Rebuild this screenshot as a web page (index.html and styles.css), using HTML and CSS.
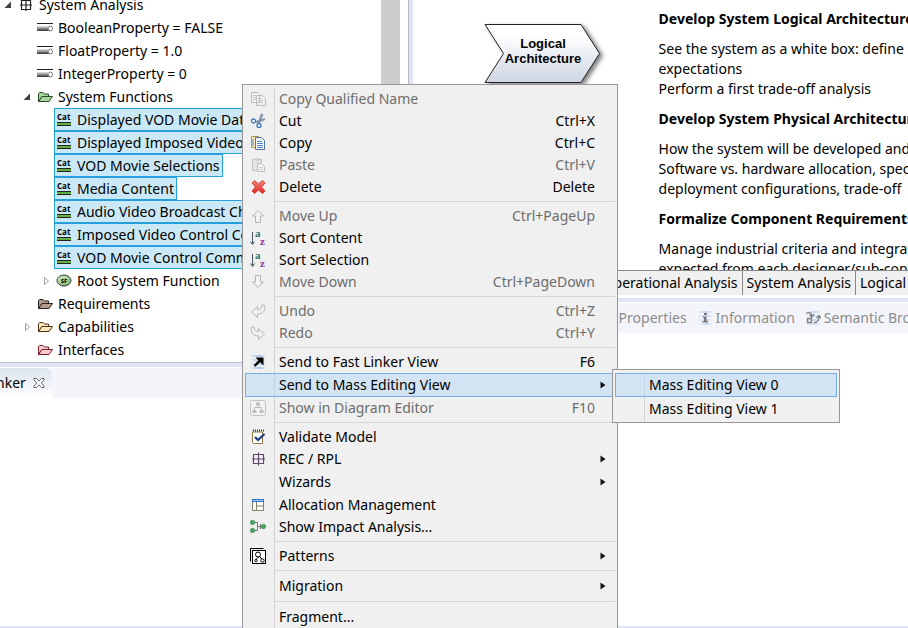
FILE: index.html
```html
<!DOCTYPE html>
<html lang="en">
<head>
<meta charset="utf-8">
<title>System Analysis</title>
<link rel="stylesheet" href="styles.css">
</head>
<body>
<svg class="defs" aria-hidden="true">
  <defs>
    <linearGradient id="steel" x1="0" y1="0" x2="0" y2="1"><stop offset="0" stop-color="#e8e8e8"/><stop offset="1" stop-color="#555"/></linearGradient>
    <linearGradient id="arrowFill" x1="0" y1="0" x2="0" y2="1"><stop offset="0.2" stop-color="#fff"/><stop offset="1" stop-color="#ccd5e1"/></linearGradient>
    <linearGradient id="redFill" x1="0" y1="0" x2="0" y2="1"><stop offset="0" stop-color="#f58a7c"/><stop offset="1" stop-color="#d9251d"/></linearGradient>
    <linearGradient id="leaf" x1="0" y1="0" x2="1" y2="1"><stop offset="0" stop-color="#d8f0d0"/><stop offset="1" stop-color="#6fae66"/></linearGradient>
    <linearGradient id="haze" gradientUnits="userSpaceOnUse" x1="0" y1="0" x2="16" y2="0"><stop offset="0" stop-color="#a9c8f0" stop-opacity="0.1"/><stop offset="0.6" stop-color="#a9c8f0"/><stop offset="1" stop-color="#a9c8f0" stop-opacity="0.2"/></linearGradient>
    <symbol id="i-open" viewBox="0 0 8 8"><path d="M7 0.5V7H0.5z" fill="#404040"/></symbol>
    <symbol id="i-closed" viewBox="0 0 8 8"><path d="M2.500 0.500L6.500 4 2.500 7.500z" fill="#fff" stroke="#a0a0a0"/></symbol>
    <symbol id="i-grid" viewBox="0 0 16 16"><path d="M3.500 3.500h9v9h-9zM8 2v12M2 8h12" fill="none" stroke="#222" stroke-width="1.200"/></symbol>
    <symbol id="i-prop" viewBox="0 0 16 16"><path d="M0 3.500h16" stroke="#222"/><path d="M0 6h11v4H0z" fill="url(#steel)"/><path d="M0 10.500h13" stroke="#444"/><ellipse cx="13.500" cy="8.500" rx="2" ry="2.500" fill="#fff" stroke="#777"/></symbol>
    <symbol id="i-folder" viewBox="0 0 16 16"><path d="M1.500 12.500V4.500L2.500 3.500H6L7.500 5H11.500V7.500H5Z" stroke="currentColor"/><path d="M1.500 12.500L5 7.500H15.500L12 12.500Z" stroke="currentColor" stroke-linejoin="round"/></symbol>
    <symbol id="i-cat" viewBox="0 0 16 16"><text x="1" y="8" class="cat-text">Cat</text><path d="M1 10h14v3H1z" fill="#62b044"/><path d="M1 10.500h14M1 13.500h14" stroke="#222"/></symbol>
    <symbol id="i-sf" viewBox="0 0 16 16"><ellipse cx="8" cy="7.500" rx="7" ry="5.500" fill="url(#leaf)" stroke="#333"/><text x="8" y="10" class="sf-text">SF</text></symbol>
    <symbol id="i-close" viewBox="0 0 12 12"><path d="M1 1.500H3.500L6 4.200 8.500 1.500H11V3L8.200 6 11 9V10.500H8.500L6 7.800 3.500 10.500H1V9L3.800 6 1 3Z" fill="#fff" stroke="#555" stroke-width="0.9"/></symbol>
    <symbol id="i-pages" viewBox="0 0 16 16"><path d="M1.500 1.500h6l2 2v8h-8zM6.500 4.500h6l3 3v7h-9z" fill="#f2f2f2" stroke="#bcbcbc"/><path d="M3 4.500h3M3 6.500h3M3 8.500h3M8 7.500h4M8 9.500h5M8 11.500h5" stroke="#c4c4c4"/></symbol>
    <symbol id="i-cut" viewBox="0 0 16 16"><path d="M8.500 10L11 1l2 .5L9.500 10zM5 8.500L14.500 5.500l.5 1.200L7 10z" fill="#8fa2b8" stroke="#6b829c" stroke-width=".6"/><circle cx="3.500" cy="8" r="2" fill="#fff" stroke="#3f78b5" stroke-width="1.300"/><circle cx="9" cy="12.500" r="2" fill="#fff" stroke="#3f78b5" stroke-width="1.300"/></symbol>
    <symbol id="i-copy" viewBox="0 0 16 16"><path d="M1.500 1.500h7v11h-7z" fill="#f7e9c0" stroke="#b09556"/><path d="M5.500 2.500h6l3 3v9h-9z" fill="#f4f8ff" stroke="#54749c"/><path d="M7 6.500h5M7 8.500h6M7 10.500h6M7 12.500h6" stroke="#5b86bd"/><path d="M3 4v7" stroke="#5b86bd"/></symbol>
    <symbol id="i-paste" viewBox="0 0 16 16"><path d="M2.500 2.500h9v11h-9z" fill="#e4e4e4" stroke="#c0c0c0"/><path d="M5 1h4v3H5z" fill="#d0d0d0"/><path d="M7.500 6.500h4l3 3v5h-7z" fill="#f4f4f4" stroke="#bdbdbd"/><path d="M9 10.500h4M9 12.500h4" stroke="#ccc"/></symbol>
    <symbol id="i-delete" viewBox="0 0 16 16"><path d="M4.500 1.500L8.500 5l4-3.500 2.500 2.500L11.500 8l3.500 4-2.500 2.500L8.500 11l-4 3.500L2 12 5.500 8 2 4z" fill="url(#redFill)" stroke="#d43c35" stroke-linejoin="round"/></symbol>
    <symbol id="i-up" viewBox="0 0 16 16"><path d="M8 2.500L13.500 8H10.500V14.500H5.500V8H2.500z" fill="#f3f3f3" stroke="#b4b4b4" stroke-linejoin="round"/></symbol>
    <symbol id="i-down" viewBox="0 0 16 16"><path d="M8 13.500L13.500 8H10.500V1.500H5.500V8H2.500z" fill="#f3f3f3" stroke="#b4b4b4" stroke-linejoin="round"/></symbol>
    <symbol id="i-sort" viewBox="0 0 16 16"><path d="M2.500 2v12M.5 11.500L2.500 14.500 4.500 11.500" fill="none" stroke="#445560"/><text x="5" y="7" class="sort-a">a</text><text x="10" y="15" class="sort-z">z</text></symbol>
    <symbol id="i-undo" viewBox="0 0 16 16"><path d="M1.500 9L7.500 3.500V6.500c2.500 0 4-1.500 4.500-4.500h2.500C16 7.500 13 11 7.500 11v3.500z" fill="#f0f0f0" stroke="#b8b8b8" stroke-linejoin="round"/></symbol>
    <symbol id="i-redo" viewBox="0 0 16 16"><path d="M14.500 9L8.500 3.500V6.500C6 6.500 4.500 5 4 2H1.500C0 7.500 3 11 8.500 11v3.500z" fill="#f0f0f0" stroke="#b8b8b8" stroke-linejoin="round"/></symbol>
    <symbol id="i-send" viewBox="0 0 16 16"><path d="M1 1h14v2H1zM1 5h14v2H1zM1 9h14v2H1zM1 13h14v2H1z" fill="url(#haze)"/><path d="M4.500 12L10.500 6" stroke="#000" stroke-width="2.400"/><path d="M5.500 3.500h8v8z" fill="#000"/></symbol>
    <symbol id="i-diagram" viewBox="0 0 16 16"><rect x=".5" y=".5" width="15" height="15" rx="2" fill="#f3f3f3" stroke="#c4c4c4"/><path d="M6 2.500h4v3H6zM2.500 10h4v3h-4zM9.500 10h4v3h-4z" fill="#bdbdbd"/><path d="M8 5v3M4.500 10V7.500h7V10" fill="none" stroke="#bdbdbd"/></symbol>
    <symbol id="i-validate" viewBox="0 0 16 16"><path d="M2.500 3v10.500l1 1h9V3z" fill="#fff" stroke="#8c7a45"/><path d="M3 1.500h11" stroke="#1d3f73" stroke-width="2" stroke-dasharray="1 1"/><path d="M5 8L8 11 14.500 5" fill="none" stroke="#174080" stroke-width="2.200"/></symbol>
    <symbol id="i-rec" viewBox="0 0 16 16"><path d="M3.500 3.500h10v9h-10zM8.500 1.500v13M2 8h13" fill="#f8f0f8" stroke="#604868" stroke-width="1.200"/></symbol>
    <symbol id="i-table" viewBox="0 0 16 16"><path d="M2.500 2.500h11v11h-11z" fill="#fff" stroke="#85806a"/><path d="M2 2h12v3H2z" fill="#2e74c4"/><path d="M3 3.500h10" stroke="#a8cdf5"/><path d="M6.500 5v8M6.500 9h7" stroke="#85806a"/></symbol>
    <symbol id="i-impact" viewBox="0 0 16 16"><path d="M3 3.500h4.500v8H3M7.500 7.500h6M10.500 5v5" fill="none" stroke="#777"/><g fill="#4fa868" stroke="#2f7d48" stroke-width=".6"><circle cx="2.500" cy="3.500" r="2.200"/><circle cx="2.500" cy="11.500" r="2.200"/><circle cx="13.500" cy="7.500" r="2.200"/></g></symbol>
    <symbol id="i-patterns" viewBox="0 0 16 16"><path d="M.5 13.500V.5h13" fill="none" stroke="#000"/><rect x="2.500" y="2.500" width="13" height="13" fill="#fff" stroke="#000"/><g fill="none" stroke="#000"><circle cx="8" cy="6.500" r="2.500"/><circle cx="6" cy="12.500" r="1.200"/><circle cx="12.500" cy="12.500" r="1.700"/><path d="M9 8.500L6.500 11M10 8.500l1.500 2.500"/></g></symbol>
    <symbol id="i-info" viewBox="0 0 16 16"><path d="M1 1h14v2H1zM1 5h14v2H1zM1 9h14v2H1zM1 13h14v2H1z" fill="url(#haze)" opacity=".6"/><path d="M7 3h3v2H7zM6 6.500h3.500V11H11v1.500H5.500V11H7V8H6z" fill="#777"/></symbol>
    <symbol id="i-semantic" viewBox="0 0 16 16"><path d="M1 1h14v2H1zM1 5h14v2H1zM1 9h14v2H1zM1 13h14v2H1z" fill="url(#haze)" opacity=".6"/><path d="M1 3.500c4-2 6 0 6 3M4.500 4.500L7 7l2-3M6.500 7.500v5h-4v-4h4M9 12.500c4 0 5-2 5-6M11.500 8L14 5.500 16 8" fill="none" stroke="#7d7d7d" stroke-width="1.300"/></symbol>
    <symbol id="i-more" viewBox="0 0 8 8"><path d="M1.500 0.500L6.500 4 1.500 7.500z" fill="#111"/></symbol>
  </defs>
</svg>

<div class="workbench">
  <div class="column">
    <section class="explorer">
      <ul class="tree">
        <li class="row"><svg class="twisty"><use href="#i-open"/></svg><span class="node"><svg class="icon"><use href="#i-grid"/></svg>System Analysis</span></li>
        <li class="row level-1"><span class="twisty"></span><span class="node"><svg class="icon"><use href="#i-prop"/></svg>BooleanProperty = FALSE</span></li>
        <li class="row level-1"><span class="twisty"></span><span class="node"><svg class="icon"><use href="#i-prop"/></svg>FloatProperty = 1.0</span></li>
        <li class="row level-1"><span class="twisty"></span><span class="node"><svg class="icon"><use href="#i-prop"/></svg>IntegerProperty = 0</span></li>
        <li class="row level-1"><svg class="twisty"><use href="#i-open"/></svg><span class="node"><svg class="icon folder green"><use href="#i-folder"/></svg>System Functions</span></li>
        <li class="row level-2"><span class="twisty"></span><span class="node selected"><svg class="icon"><use href="#i-cat"/></svg>Displayed VOD Movie Data</span></li>
        <li class="row level-2"><span class="twisty"></span><span class="node selected"><svg class="icon"><use href="#i-cat"/></svg>Displayed Imposed Video</span></li>
        <li class="row level-2"><span class="twisty"></span><span class="node selected"><svg class="icon"><use href="#i-cat"/></svg>VOD Movie Selections</span></li>
        <li class="row level-2"><span class="twisty"></span><span class="node selected"><svg class="icon"><use href="#i-cat"/></svg>Media Content</span></li>
        <li class="row level-2"><span class="twisty"></span><span class="node selected"><svg class="icon"><use href="#i-cat"/></svg>Audio Video Broadcast Channel</span></li>
        <li class="row level-2"><span class="twisty"></span><span class="node selected"><svg class="icon"><use href="#i-cat"/></svg>Imposed Video Control Commands</span></li>
        <li class="row level-2"><span class="twisty"></span><span class="node selected"><svg class="icon"><use href="#i-cat"/></svg>VOD Movie Control Commands</span></li>
        <li class="row level-2"><svg class="twisty"><use href="#i-closed"/></svg><span class="node"><svg class="icon"><use href="#i-sf"/></svg>Root System Function</span></li>
        <li class="row level-1"><span class="twisty"></span><span class="node"><svg class="icon folder brown"><use href="#i-folder"/></svg>Requirements</span></li>
        <li class="row level-1"><svg class="twisty"><use href="#i-closed"/></svg><span class="node"><svg class="icon folder sand"><use href="#i-folder"/></svg>Capabilities</span></li>
        <li class="row level-1"><span class="twisty"></span><span class="node"><svg class="icon folder red"><use href="#i-folder"/></svg>Interfaces</span></li>
      </ul>
      <div class="scrollbar"></div>
    </section>
    <section class="view">
      <div class="view-tabs"><button class="active-tab" type="button">nker <svg class="close"><use href="#i-close"/></svg></button></div>
      <div class="view-body"></div>
    </section>
  </div>

  <div class="column">
    <section class="editor">
      <div class="page">
        <svg class="step" viewBox="0 0 124 72">
          <path class="step-shape" d="M1 4.500H97L115.500 33.500 97 62.500H1L19.500 33.500Z"/>
          <text class="step-label" x="59" y="28">Logical</text>
          <text class="step-label" x="59" y="43">Architecture</text>
        </svg>
        <div class="guide">
          <h2>Develop System Logical Architecture</h2>
          <p>See the system as a white box: define<br>expectations<br>Perform a first trade-off analysis</p>
          <h2>Develop System Physical Architecture</h2>
          <p>How the system will be developed and<br>Software vs. hardware allocation, specification<br>deployment configurations, trade-off</p>
          <h2>Formalize Component Requirements</h2>
          <p>Manage industrial criteria and integration<br>expected from each designer/sub-contractor</p>
        </div>
      </div>
      <nav class="page-tabs">
        <button type="button">Operational Analysis</button>
        <button type="button">System Analysis</button>
        <button type="button">Logical</button>
      </nav>
    </section>
    <section class="view right-view">
      <div class="view-tabs idle">
        <button type="button">Properties</button>
        <button type="button"><svg class="icon"><use href="#i-info"/></svg>Information</button>
        <button type="button"><svg class="icon"><use href="#i-semantic"/></svg>Semantic Browser</button>
      </div>
      <div class="view-body"></div>
    </section>
  </div>
</div>

<ul class="menu context">
  <li><button class="item" type="button" disabled><svg class="icon"><use href="#i-pages"/></svg><span>Copy Qualified Name</span></button></li>
  <li><button class="item" type="button"><svg class="icon"><use href="#i-cut"/></svg><span>Cut</span><kbd>Ctrl+X</kbd></button></li>
  <li><button class="item" type="button"><svg class="icon"><use href="#i-copy"/></svg><span>Copy</span><kbd>Ctrl+C</kbd></button></li>
  <li><button class="item" type="button" disabled><svg class="icon"><use href="#i-paste"/></svg><span>Paste</span><kbd>Ctrl+V</kbd></button></li>
  <li><button class="item" type="button"><svg class="icon"><use href="#i-delete"/></svg><span>Delete</span><kbd>Delete</kbd></button></li>
  <li class="separator"></li>
  <li><button class="item" type="button" disabled><svg class="icon"><use href="#i-up"/></svg><span>Move Up</span><kbd>Ctrl+PageUp</kbd></button></li>
  <li><button class="item" type="button"><svg class="icon"><use href="#i-sort"/></svg><span>Sort Content</span></button></li>
  <li><button class="item" type="button"><svg class="icon"><use href="#i-sort"/></svg><span>Sort Selection</span></button></li>
  <li><button class="item" type="button" disabled><svg class="icon"><use href="#i-down"/></svg><span>Move Down</span><kbd>Ctrl+PageDown</kbd></button></li>
  <li class="separator"></li>
  <li><button class="item" type="button" disabled><svg class="icon"><use href="#i-undo"/></svg><span>Undo</span><kbd>Ctrl+Z</kbd></button></li>
  <li><button class="item" type="button" disabled><svg class="icon"><use href="#i-redo"/></svg><span>Redo</span><kbd>Ctrl+Y</kbd></button></li>
  <li class="separator"></li>
  <li><button class="item" type="button"><svg class="icon"><use href="#i-send"/></svg><span>Send to Fast Linker View</span><kbd>F6</kbd></button></li>
  <li class="parent"><button class="item plain highlighted" type="button"><span>Send to Mass Editing View</span><svg class="more"><use href="#i-more"/></svg></button>
    <ul class="menu submenu">
      <li><button class="item plain highlighted" type="button"><span>Mass Editing View 0</span></button></li>
      <li><button class="item plain" type="button"><span>Mass Editing View 1</span></button></li>
    </ul>
  </li>
  <li><button class="item" type="button" disabled><svg class="icon"><use href="#i-diagram"/></svg><span>Show in Diagram Editor</span><kbd>F10</kbd></button></li>
  <li class="separator"></li>
  <li><button class="item" type="button"><svg class="icon"><use href="#i-validate"/></svg><span>Validate Model</span></button></li>
  <li><button class="item" type="button"><svg class="icon"><use href="#i-rec"/></svg><span>REC / RPL</span><svg class="more"><use href="#i-more"/></svg></button></li>
  <li><button class="item plain" type="button"><span>Wizards</span><svg class="more"><use href="#i-more"/></svg></button></li>
  <li><button class="item" type="button"><svg class="icon"><use href="#i-table"/></svg><span>Allocation Management</span></button></li>
  <li><button class="item" type="button"><svg class="icon"><use href="#i-impact"/></svg><span>Show Impact Analysis...</span></button></li>
  <li class="separator"></li>
  <li><button class="item" type="button"><svg class="icon"><use href="#i-patterns"/></svg><span>Patterns</span><svg class="more"><use href="#i-more"/></svg></button></li>
  <li class="separator"></li>
  <li><button class="item plain" type="button"><span>Migration</span><svg class="more"><use href="#i-more"/></svg></button></li>
  <li class="separator"></li>
  <li><button class="item plain" type="button"><span>Fragment...</span></button></li>
</ul>
</body>
</html>
```
FILE: styles.css
```css
* { box-sizing: border-box; }

html, body { height: 100%; }

body {
  margin: 0;
  overflow: hidden;
  position: relative;
  background: #fff;
  color: #000;
  font: 14px/20px "Noto Sans", "Open Sans", sans-serif;
}

ul { list-style: none; margin: 0; padding: 0; }

button {
  margin: 0;
  padding: 0;
  border: 0;
  background: none;
  color: inherit;
  font: inherit;
  text-align: left;
  white-space: nowrap;
}

.defs { position: absolute; width: 0; height: 0; }

.icon { width: 16px; height: 16px; flex: none; }

/* Workbench */
.workbench {
  display: grid;
  grid-template-columns: 45% 1fr;
  height: 100%;
}

.column {
  display: flex;
  flex-direction: column;
  min-width: 0;
  overflow: hidden;
}

.explorer {
  display: flex;
  padding-bottom: 1px;
  border-right: 1px solid #b8b8c0;
  border-bottom: 1px solid #c4c4c8;
  overflow: hidden;
}

/* The tree is scrolled a little past its first row */
.tree { flex: 1; margin-top: -7px; min-width: 0; overflow: hidden; }

.scrollbar { width: 19px; margin-right: 8px; background: #cdcdcd; }

.row { display: flex; align-items: center; height: 23px; }
.level-1 { padding-left: 19px; }
.level-2 { padding-left: 38px; }

.twisty { width: 8px; height: 8px; flex: none; margin: 0 4px; }

.node {
  display: flex;
  align-items: center;
  gap: 5px;
  height: 23px;
  padding: 0 2px 0 1px;
  border: 1px solid transparent;
  white-space: nowrap;
}

.selected { background: #cbe8f6; border-color: #26a0da; }

.cat-text { font: bold 8px "Open Sans", sans-serif; }
.sf-text { font: bold 6px "Open Sans", sans-serif; text-anchor: middle; }
.sort-a { font: bold 11px "Liberation Serif", serif; fill: #1f7a70; }
.sort-z { font: bold 11px "Liberation Serif", serif; fill: #8a3a9c; }

.folder.green { color: #2a4a26; fill: #a5d89c; }
.folder.brown { color: #2c201c; fill: #b39a8c; }
.folder.sand { color: #4c3218; fill: #fbe9bd; }
.folder.red { color: #7c1c24; fill: #f6ccd0; }

.view {
  display: flex;
  flex-direction: column;
  flex: 1;
  border-top: 4px solid #dfe5f4;
  border-bottom: 2px solid #dfe5f4;
}

.view-tabs {
  display: flex;
  height: 31px;
  border-top: 1px solid #fff;
  background: #f4f5fb;
}

.view-body { flex: 1; background: #fff; }

.active-tab {
  display: flex;
  align-items: center;
  gap: 7px;
  margin-left: -4px;
  padding-right: 7px;
  border-top-right-radius: 8px;
  background: linear-gradient(#dce4ee, #fff);
}

.close { width: 12px; height: 12px; }

.idle { color: #8c8c8c; gap: 10px; padding-left: 210px; }
.idle button { display: flex; align-items: center; gap: 3px; }

/* Editor */
.editor {
  display: flex;
  flex-direction: column;
  height: 47%;
  border-left: 4px solid #dfe5f7;
}

.page {
  display: flex;
  flex: 1;
  gap: 51px;
  padding: 9px 0 0 71px;
  min-height: 0;
  overflow: hidden;
}

.step { width: 124px; height: 72px; flex: none; margin-top: 11px; overflow: visible; }
.step-shape {
  fill: url(#arrowFill);
  stroke: #222;
  filter: drop-shadow(3px 2px 2px rgba(0, 0, 0, 0.5));
}
.step-label { font: bold 13px "Liberation Sans", sans-serif; text-anchor: middle; }

.guide { white-space: nowrap; }
.guide h2 { margin: 0 0 10px; font-size: 14px; line-height: 20px; }
.guide p { margin: 0 0 10px; }

.page-tabs {
  display: flex;
  height: 25px;
  flex: none;
  padding-left: 186px;
  border-top: 1px solid #888;
  background: #f0f0f0;
}
.page-tabs button { padding: 0 4px; border-right: 1px solid #888; }

.right-view { margin-top: 3px; }

/* Menus */
.menu {
  position: absolute;
  padding: 3px 2px;
  border: 1px solid #979797;
  background: linear-gradient(#d4d4d4, #d4d4d4) 31px 3px / 1px 100% no-repeat #f0f0f0;
}

.context { left: 242px; top: 84px; width: 376px; }

.parent { position: relative; }

.submenu { left: calc(100% - 3px); top: -4px; width: 228px; padding-bottom: 1px; }

.item {
  display: flex;
  align-items: center;
  width: 100%;
  height: 22px;
  padding: 0 19px 0 4px;
  border: 1px solid transparent;
}
.item .icon { margin-right: 13px; }
.item:disabled { color: #6d6d6d; }
.item kbd { margin-left: auto; font: inherit; }

.plain { height: 24px; padding-left: 33px; }

.highlighted { border-color: #78aee5; background: rgba(180, 215, 245, 0.5); }

.more { width: 8px; height: 8px; margin: 0 -12px 0 auto; }

.separator { height: 7px; padding: 3px 0 3px 30px; }
.separator::before { content: ""; display: block; height: 1px; background: #d4d4d4; }
```
